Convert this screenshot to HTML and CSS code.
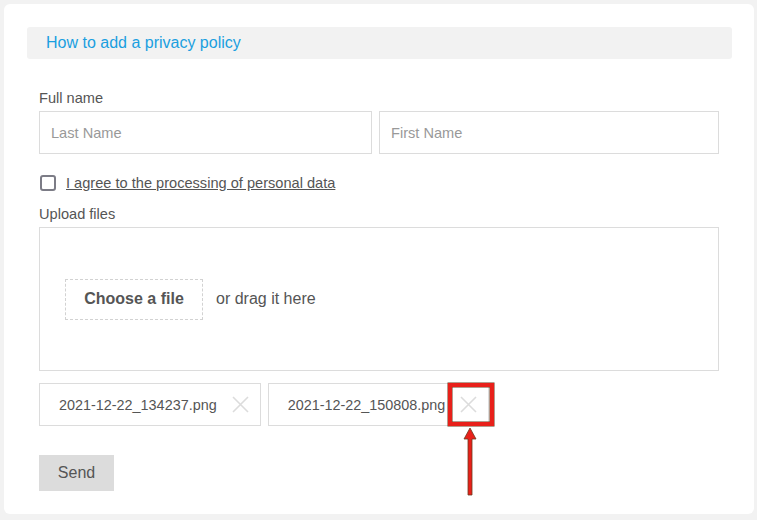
FILE: index.html
```html
<!DOCTYPE html>
<html lang="en">
<head>
  <meta charset="UTF-8">
  <meta name="viewport" content="width=device-width, initial-scale=1.0">
  <title>Feedback form</title>
  <link rel="stylesheet" href="styles.css">
</head>
<body>
  <div class="card">
    <div class="policy-bar">
      <a href="#" class="policy-link">How to add a privacy policy</a>
    </div>

    <form class="form">
      <div class="label">Full name</div>
      <div class="name-row">
        <input type="text" class="field" placeholder="Last Name">
        <input type="text" class="field" placeholder="First Name">
      </div>

      <label class="agree">
        <span class="checkbox"></span>
        <span class="agree-text">I agree to the processing of personal data</span>
      </label>

      <div class="label label-upload">Upload files</div>
      <div class="dropzone">
        <span class="choose">Choose a file</span>
        <span class="drag">or drag it here</span>
      </div>

      <div class="files">
        <div class="file">
          <span class="file-name">2021-12-22_134237.png</span>
          <svg class="remove" width="17" height="17" viewBox="0 0 17 17"><path d="M1 1L16 16M16 1L1 16" stroke="#dcdcdc" stroke-width="1.6" fill="none"/></svg>
        </div>
        <div class="file">
          <span class="file-name">2021-12-22_150808.png</span>
          <svg class="remove" width="17" height="17" viewBox="0 0 17 17"><path d="M1 1L16 16M16 1L1 16" stroke="#dcdcdc" stroke-width="1.6" fill="none"/></svg>
        </div>

        <!-- annotation over the second remove button -->
        <div class="mark"></div>
        <svg class="arrow" width="16" height="70" viewBox="0 0 16 70">
          <path d="M8 1L14 12H10V68H6V12H2Z" fill="#e8201a" stroke="#6b3b1f" stroke-width="0.8"/>
        </svg>
      </div>

      <button type="button" class="send">Send</button>
    </form>
  </div>
</body>
</html>
```

FILE: styles.css
```css
body {
  margin: 0;
  padding: 4px 3px 6px 4px;
  background-color: #f2f2f2;
  font-family: "Liberation Sans", Arial, sans-serif;
  color: #555;
}
.card {
  background-color: #fff;
  border-radius: 6px;
  padding: 23px 22px 23px 23px;
}
.policy-bar {
  background-color: #f2f2f2;
  border-radius: 3px;
  height: 32px;
  padding-left: 19px;
  display: flex;
  align-items: center;
}
.policy-link {
  color: #1a9fe0;
  font-size: 16px;
  text-decoration: none;
}
.form {
  padding: 31px 13px 0 12px;
}
.label {
  font-size: 14.6px;
  line-height: 17px;
  margin-bottom: 4px;
}
.name-row {
  display: grid;
  grid-template-columns: 333px 1fr;
  gap: 7px;
}
.field {
  box-sizing: border-box;
  height: 43px;
  border: 1px solid #dcdcdc;
  padding: 0 11px;
  font-family: inherit;
  font-size: 14.6px;
  color: #555;
  outline: none;
}
.field::placeholder {
  color: #999;
}
.agree {
  display: flex;
  align-items: center;
  gap: 10px;
  margin-top: 20px;
  height: 18px;
  padding-left: 1px;
}
.checkbox {
  box-sizing: border-box;
  width: 16px;
  height: 16px;
  border: 2px solid #7c7c86;
  border-radius: 3px;
}
.agree-text {
  font-size: 14.6px;
  text-decoration: underline;
}
.label-upload {
  margin-top: 14px;
}
.dropzone {
  box-sizing: border-box;
  height: 144px;
  border: 1px solid #dcdcdc;
  padding-left: 25px;
  display: flex;
  align-items: center;
  gap: 13px;
}
.choose {
  box-sizing: border-box;
  height: 41px;
  width: 138px;
  border: 1px dashed #d2d2d2;
  display: flex;
  align-items: center;
  justify-content: center;
  font-size: 16px;
  font-weight: bold;
}
.drag {
  font-size: 16px;
}
.files {
  position: relative;
  display: flex;
  gap: 7px;
  margin-top: 12px;
}
.file {
  box-sizing: border-box;
  height: 43px;
  border: 1px solid #dcdcdc;
  padding: 0 11px 0 19px;
  display: flex;
  align-items: center;
  gap: 15px;
  font-size: 14.4px;
}
.mark {
  position: absolute;
  left: 409px;
  top: 0;
  width: 46px;
  height: 43px;
  box-sizing: border-box;
  border: 4px solid #e8201a;
  box-shadow: 0 0 0 0.5px #6b3b1f, inset 0 0 0 0.5px #6b3b1f;
}
.arrow {
  position: absolute;
  left: 423px;
  top: 44px;
}
.send {
  margin-top: 29px;
  width: 75px;
  height: 36px;
  border: none;
  background-color: #dcdcdc;
  color: #555;
  font-family: inherit;
  font-size: 16px;
  padding: 0;
}
```
